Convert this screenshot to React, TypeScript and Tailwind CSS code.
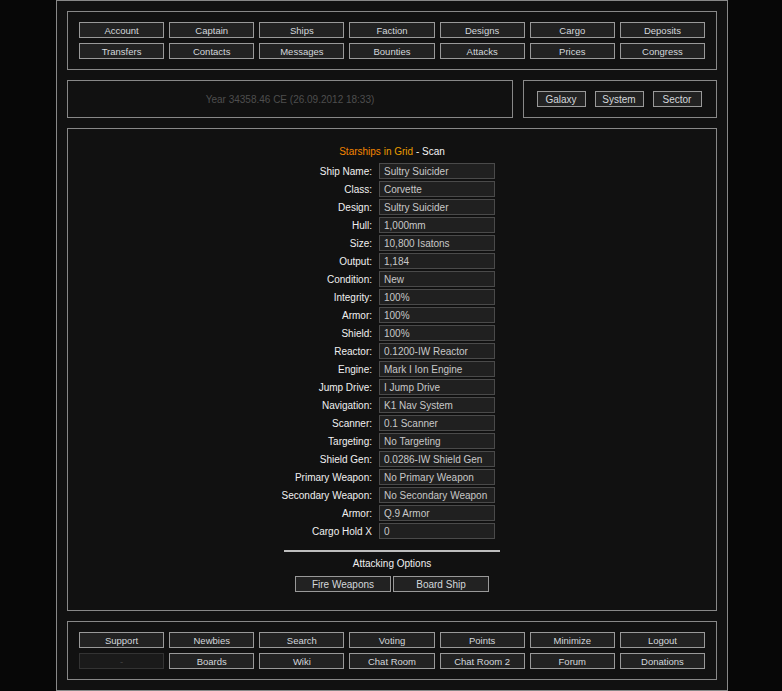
const topNav = [
  ['Account', 'Captain', 'Ships', 'Faction', 'Designs', 'Cargo', 'Deposits'],
  ['Transfers', 'Contacts', 'Messages', 'Bounties', 'Attacks', 'Prices', 'Congress'],
];

const bottomNav = [
  ['Support', 'Newbies', 'Search', 'Voting', 'Points', 'Minimize', 'Logout'],
  ['-', 'Boards', 'Wiki', 'Chat Room', 'Chat Room 2', 'Forum', 'Donations'],
];

const shipInfo: [string, string][] = [
  ['Ship Name:', 'Sultry Suicider'],
  ['Class:', 'Corvette'],
  ['Design:', 'Sultry Suicider'],
  ['Hull:', '1,000mm'],
  ['Size:', '10,800 Isatons'],
  ['Output:', '1,184'],
  ['Condition:', 'New'],
  ['Integrity:', '100%'],
  ['Armor:', '100%'],
  ['Shield:', '100%'],
  ['Reactor:', '0.1200-IW Reactor'],
  ['Engine:', 'Mark I Ion Engine'],
  ['Jump Drive:', 'I Jump Drive'],
  ['Navigation:', 'K1 Nav System'],
  ['Scanner:', '0.1 Scanner'],
  ['Targeting:', 'No Targeting'],
  ['Shield Gen:', '0.0286-IW Shield Gen'],
  ['Primary Weapon:', 'No Primary Weapon'],
  ['Secondary Weapon:', 'No Secondary Weapon'],
  ['Armor:', 'Q.9 Armor'],
  ['Cargo Hold X', '0'],
];

function Btn({ label, className = '' }: { label: string; className?: string }) {
  const disabled = label === '-';
  return (
    <button
      className={
        'block h-[16px] pt-[2px] text-center text-[9.5px] leading-[12px] border whitespace-nowrap ' +
        (disabled
          ? 'bg-[#1a1a1a] border-[#333] text-[#444] '
          : 'bg-[#222] border-[#999] text-[#d4d8dc] ') +
        className
      }
    >
      {label}
    </button>
  );
}

function NavPanel({ rows }: { rows: string[][] }) {
  return (
    <div className="border border-[#888] px-[11px] py-[10px]">
      <div className="grid grid-cols-7 gap-[5px]">
        {rows.flat().map((l, i) => (
          <Btn key={i} label={l} />
        ))}
      </div>
    </div>
  );
}

export default function App() {
  return (
    <div
      className="min-h-[691px] bg-[#070707]"
      style={{ fontFamily: '"Liberation Sans", Arial, sans-serif' }}
    >
      <div className="ml-[56px] w-[672px] h-[691px] border border-[#888] bg-[#111] p-[10px]">
        <NavPanel rows={topNav} />

        <div className="flex gap-[10px] mt-[10px]">
          <div className="flex-1 h-[38px] border border-[#888] flex items-center justify-center text-[10px] text-[#4e4e4e]">
            Year 34358.46 CE (26.09.2012 18:33)
          </div>
          <div className="w-[194px] h-[38px] border border-[#888] flex items-center justify-center gap-[9px] pr-[2px]">
            <Btn label="Galaxy" className="w-[49px] text-[10px]" />
            <Btn label="System" className="w-[49px] text-[10px]" />
            <Btn label="Sector" className="w-[49px] text-[10px]" />
          </div>
        </div>

        <div className="mt-[10px] h-[483px] border border-[#888] pt-[15px] text-[10px]">
          <div className="text-center leading-[16px]">
            <span className="text-[#f48400]">Starships</span>{' '}
            <span className="text-[#e89c00]">in Grid</span>
            <span className="text-[#f4f4f4]"> - Scan</span>
          </div>

          <div className="mt-[3px] ml-[204px] flex flex-col gap-[2px]">
            {shipInfo.map(([k, v], i) => (
              <div key={i} className="flex items-center h-[16px]">
                <div className="w-[101px] text-right text-[#f0f0f0] pr-[1px]">{k}</div>
                <div className="ml-[6px] w-[116px] h-[16px] border border-[#4a4a4a] bg-[#202020] text-[#c8c8c8] pl-[4px] flex items-center whitespace-nowrap overflow-hidden">
                  {v}
                </div>
              </div>
            ))}
          </div>

          <div className="mt-[11px] mx-auto w-[216px] h-[2px] bg-[#bdbdbd]" />

          <div className="mt-[4px] text-center leading-[16px] text-[#f0f0f0]">
            Attacking Options
          </div>

          <div className="mt-[4px] flex justify-center gap-[2px]">
            <Btn label="Fire Weapons" className="w-[96px] text-[10px]" />
            <Btn label="Board Ship" className="w-[96px] text-[10px]" />
          </div>
        </div>

        <div className="mt-[10px]">
          <NavPanel rows={bottomNav} />
        </div>
      </div>
    </div>
  );
}
